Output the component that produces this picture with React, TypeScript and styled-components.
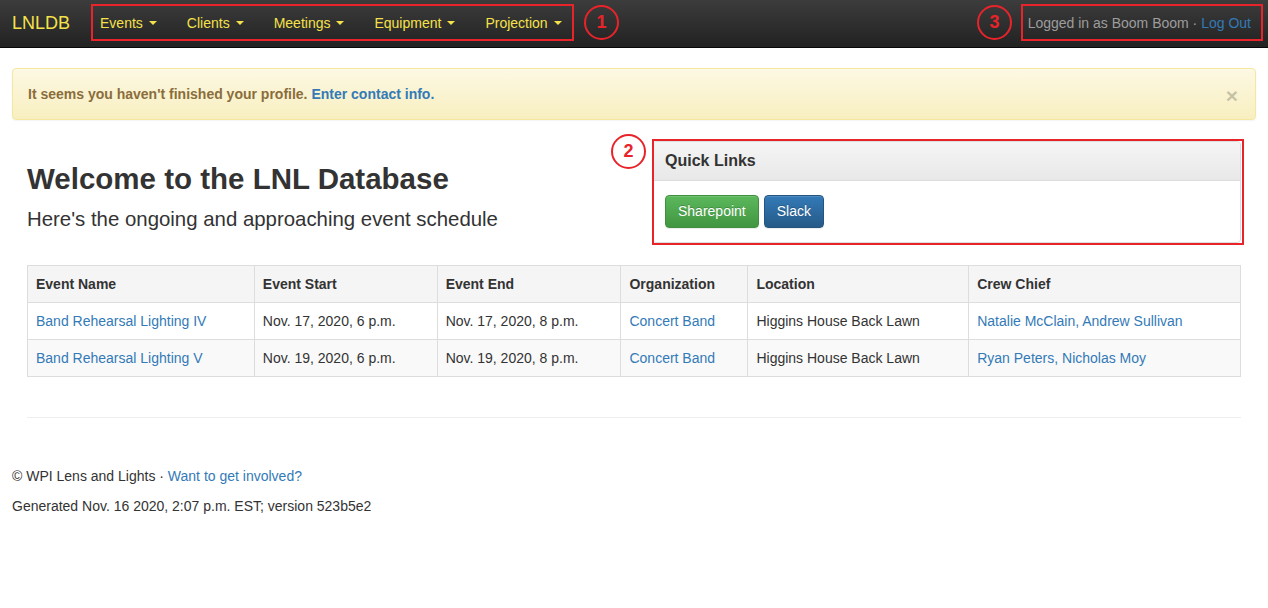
import React from "react";
import styled, { createGlobalStyle } from "styled-components";

const GlobalStyle = createGlobalStyle`
  html, body {
    margin: 0;
    padding: 0;
    background: #fff;
  }
  body {
    font-family: "Liberation Sans", Arial, Helvetica, sans-serif;
    font-size: 14px;
    line-height: 1.42857;
    color: #333;
  }
  * {
    box-sizing: border-box;
  }
`;

const Page = styled.div`
  position: relative;
  width: 1268px;
  min-height: 608px;
`;

const Navbar = styled.nav`
  height: 48px;
  display: flex;
  align-items: center;
  background: linear-gradient(to bottom, #3c3c3c 0%, #222 100%);
  border-bottom: 1px solid #080808;
  padding: 0 17px 0 12px;
`;

const Brand = styled.a`
  color: #f5e14a;
  font-size: 18px;
  text-decoration: none;
  margin-right: 15px;
`;

const NavList = styled.ul`
  display: flex;
  list-style: none;
  margin: 0;
  padding: 0;
`;

const NavItem = styled.li`
  padding: 0 15px;
  color: #f5e14a;
  font-size: 14px;
  display: flex;
  align-items: center;
`;

const Caret = styled.span`
  display: inline-block;
  margin-left: 6px;
  width: 0;
  height: 0;
  border-top: 4px solid #f5e14a;
  border-left: 4px solid transparent;
  border-right: 4px solid transparent;
`;

const NavRight = styled.div`
  margin-left: auto;
  color: #9d9d9d;
  font-size: 14px;
`;

const Link = styled.a`
  color: #337ab7;
  text-decoration: none;
`;

const Content = styled.div`
  padding: 20px 12px 0;
`;

const Alert = styled.div`
  display: flex;
  align-items: flex-start;
  justify-content: space-between;
  padding: 15px;
  line-height: 20px;
  border: 1px solid #f5e79e;
  border-radius: 4px;
  background: linear-gradient(to bottom, #fcf8e3 0%, #f8efc0 100%);
  color: #8a6d3b;
  font-weight: bold;
  box-shadow: inset 0 1px 0 rgba(255, 255, 255, 0.25), 0 1px 2px rgba(0, 0, 0, 0.05);
`;

const AlertLink = styled(Link)`
  color: #337ab7;
`;

const Close = styled.span`
  font-size: 21px;
  line-height: 24px;
  margin: 0 2px -4px 0;
  font-weight: bold;
  color: #000;
  opacity: 0.2;
`;

const Row = styled.div`
  display: flex;
  padding: 20px 15px 0;
  gap: 34px;
`;

const Intro = styled.div`
  flex: 1;
`;

const Title = styled.h1`
  font-size: 29.5px;
  font-weight: bold;
  line-height: 1.1;
  margin: 23px 0 13px;
`;

const Subtitle = styled.p`
  font-size: 20.4px;
  font-weight: 300;
  line-height: 1.1;
  margin: 0;
`;

const Panel = styled.div`
  width: 589px;
  margin-top: 1px;
  border: 1px solid #ddd;
  border-radius: 4px;
`;

const PanelHeading = styled.div`
  padding: 10px 12px;
  font-size: 16px;
  font-weight: bold;
  line-height: 18px;
  border-bottom: 1px solid #ddd;
  background: linear-gradient(to bottom, #f5f5f5 0%, #e8e8e8 100%);
  border-radius: 3px 3px 0 0;
`;

const PanelBody = styled.div`
  padding: 14px 12px;
  display: flex;
  gap: 5px;
`;

const Button = styled.a<{ $variant: "success" | "primary" }>`
  display: inline-block;
  padding: 6px 12px;
  font-size: 14px;
  line-height: 19px;
  color: #fff;
  text-decoration: none;
  border-radius: 4px;
  border: 1px solid ${(p) => (p.$variant === "success" ? "#3e8f3e" : "#245580")};
  background: ${(p) =>
    p.$variant === "success"
      ? "linear-gradient(to bottom, #5cb85c 0%, #419641 100%)"
      : "linear-gradient(to bottom, #337ab7 0%, #265a88 100%)"};
  box-shadow: inset 0 1px 0 rgba(255, 255, 255, 0.15), 0 1px 1px rgba(0, 0, 0, 0.075);
  text-shadow: 0 -1px 0 rgba(0, 0, 0, 0.2);
`;

const TableWrap = styled.div`
  padding: 22px 15px 0;
`;

const Table = styled.table`
  width: 100%;
  border-collapse: collapse;
  border: 1px solid #ddd;
`;

const Th = styled.th<{ $w: number }>`
  width: ${(p) => p.$w}px;
  text-align: left;
  padding: 8px;
  line-height: 20px;
  border: 1px solid #ddd;
  background: #f5f5f5;
  font-weight: bold;
`;

const Tr = styled.tr<{ $striped?: boolean }>`
  background: ${(p) => (p.$striped ? "#f9f9f9" : "#fff")};
`;

const Td = styled.td`
  padding: 8px;
  line-height: 20px;
  border: 1px solid #ddd;
`;

const Rule = styled.hr`
  margin: 40px 15px 0;
  border: 0;
  border-top: 1px solid #eee;
`;

const Footer = styled.footer`
  padding-top: 49px;
`;

const FooterLine = styled.p`
  margin: 0 0 10px;
`;

const Mark = styled.div`
  position: absolute;
  border: 2px solid #e8242a;
`;

const Badge = styled.div`
  position: absolute;
  width: 35px;
  height: 35px;
  border: 2px solid #e8242a;
  border-radius: 50%;
  color: #e8242a;
  font-size: 18px;
  font-weight: bold;
  display: flex;
  align-items: center;
  justify-content: center;
`;

const navItems = ["Events", "Clients", "Meetings", "Equipment", "Projection"];

const columns: [string, number][] = [
  ["Event Name", 227],
  ["Event Start", 183],
  ["Event End", 184],
  ["Organization", 127],
  ["Location", 221],
  ["Crew Chief", 272],
];

const events = [
  {
    name: "Band Rehearsal Lighting IV",
    start: "Nov. 17, 2020, 6 p.m.",
    end: "Nov. 17, 2020, 8 p.m.",
    org: "Concert Band",
    location: "Higgins House Back Lawn",
    chiefs: "Natalie McClain, Andrew Sullivan",
  },
  {
    name: "Band Rehearsal Lighting V",
    start: "Nov. 19, 2020, 6 p.m.",
    end: "Nov. 19, 2020, 8 p.m.",
    org: "Concert Band",
    location: "Higgins House Back Lawn",
    chiefs: "Ryan Peters, Nicholas Moy",
  },
];

function App() {
  return (
    <Page>
      <GlobalStyle />
      <Navbar>
        <Brand>LNLDB</Brand>
        <NavList>
          {navItems.map((item) => (
            <NavItem key={item}>
              {item}
              <Caret />
            </NavItem>
          ))}
        </NavList>
        <NavRight>
          Logged in as Boom Boom · <Link>Log Out</Link>
        </NavRight>
      </Navbar>

      <Content>
        <Alert>
          <span>
            It seems you haven't finished your profile.{" "}
            <AlertLink>Enter contact info.</AlertLink>
          </span>
          <Close>×</Close>
        </Alert>

        <Row>
          <Intro>
            <Title>Welcome to the LNL Database</Title>
            <Subtitle>Here's the ongoing and approaching event schedule</Subtitle>
          </Intro>
          <Panel>
            <PanelHeading>Quick Links</PanelHeading>
            <PanelBody>
              <Button $variant="success">Sharepoint</Button>
              <Button $variant="primary">Slack</Button>
            </PanelBody>
          </Panel>
        </Row>

        <TableWrap>
          <Table>
            <thead>
              <tr>
                {columns.map(([label, w]) => (
                  <Th key={label} $w={w}>
                    {label}
                  </Th>
                ))}
              </tr>
            </thead>
            <tbody>
              {events.map((ev, i) => (
                <Tr key={ev.name} $striped={i % 2 === 1}>
                  <Td>
                    <Link>{ev.name}</Link>
                  </Td>
                  <Td>{ev.start}</Td>
                  <Td>{ev.end}</Td>
                  <Td>
                    <Link>{ev.org}</Link>
                  </Td>
                  <Td>{ev.location}</Td>
                  <Td>
                    <Link>{ev.chiefs}</Link>
                  </Td>
                </Tr>
              ))}
            </tbody>
          </Table>
        </TableWrap>

        <Rule />

        <Footer>
          <FooterLine>
            © WPI Lens and Lights · <Link>Want to get involved?</Link>
          </FooterLine>
          <FooterLine>Generated Nov. 16 2020, 2:07 p.m. EST; version 523b5e2</FooterLine>
        </Footer>
      </Content>

      {/* annotation marks */}
      <Mark style={{ left: 91, top: 4, width: 483, height: 37 }} />
      <Badge style={{ left: 584, top: 5 }}>1</Badge>
      <Mark style={{ left: 1021, top: 4, width: 242, height: 37 }} />
      <Badge style={{ left: 977, top: 5 }}>3</Badge>
      <Mark style={{ left: 652, top: 139, width: 592, height: 106 }} />
      <Badge style={{ left: 611, top: 134 }}>2</Badge>
    </Page>
  );
}

export default App;
